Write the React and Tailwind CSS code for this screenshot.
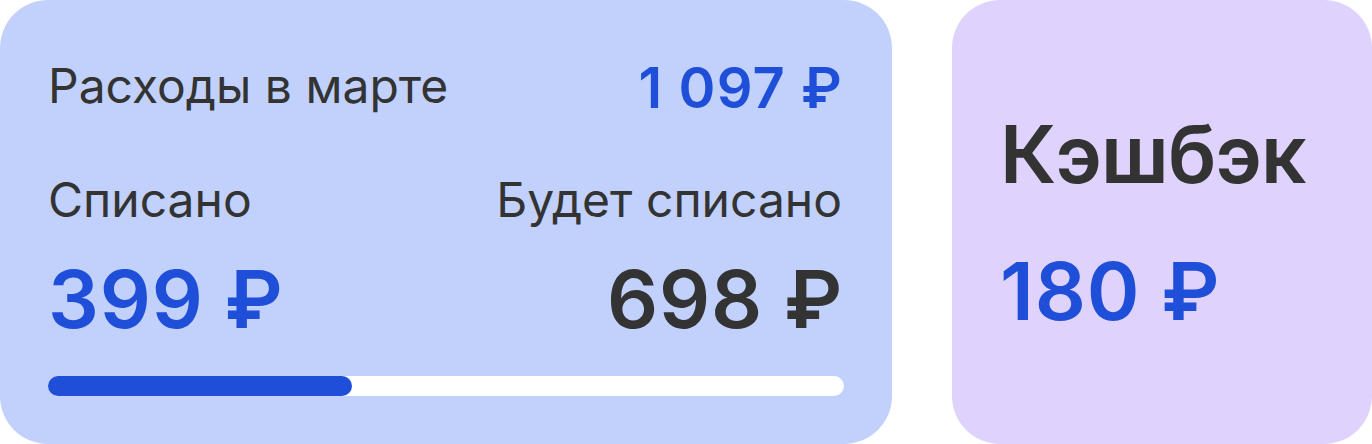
import React from 'react';

const spent = 399;
const total = 1097;

export default function App() {
  // 399 из 1097 — ширина полоски на макете немного больше пропорции
  const barWidth = 304;

  return (
    <div className="flex gap-[60px] w-[1372px] h-[444px] bg-white font-['Inter','Noto_Sans',sans-serif] text-[#333333]">
      <div className="flex flex-col w-[892px] h-[444px] rounded-[48px] bg-[#c1d1fc] px-12 pt-[60px] pb-12">
        <div className="flex items-start justify-between">
          <span className="mt-[2px] text-[48px] leading-none">Расходы в марте</span>
          <span className="mr-[1px] text-[56px] leading-none font-semibold tracking-[0.02em] text-[#1f4fd8]">1 097 ₽</span>
        </div>
        <div className="mt-[60px] flex justify-between text-[48px] leading-none">
          <span>Списано</span>
          <span className="mr-[2px]">Будет списано</span>
        </div>
        <div className="mt-[35px] flex justify-between text-[80px] leading-none font-semibold tracking-[0.01em]">
          <span className="text-[#1f4fd8]">{spent} ₽</span>
          <span className="mr-[1px]">{total - spent} ₽</span>
        </div>
        <div className="mt-[37px] h-5 w-full rounded-full bg-white">
          <div className="h-5 rounded-full bg-[#1f4fd8]" style={{ width: barWidth }} />
        </div>
      </div>
      <div className="flex flex-col w-[420px] h-[444px] rounded-[48px] bg-[#dfd3fe] px-12 pt-[114px]">
        <span className="text-[80px] leading-none font-semibold tracking-[-0.01em]">Кэшбэк</span>
        <span className="mt-[57px] text-[80px] leading-none font-semibold tracking-[0.01em] text-[#1f4fd8]">180 ₽</span>
      </div>
    </div>
  );
}
